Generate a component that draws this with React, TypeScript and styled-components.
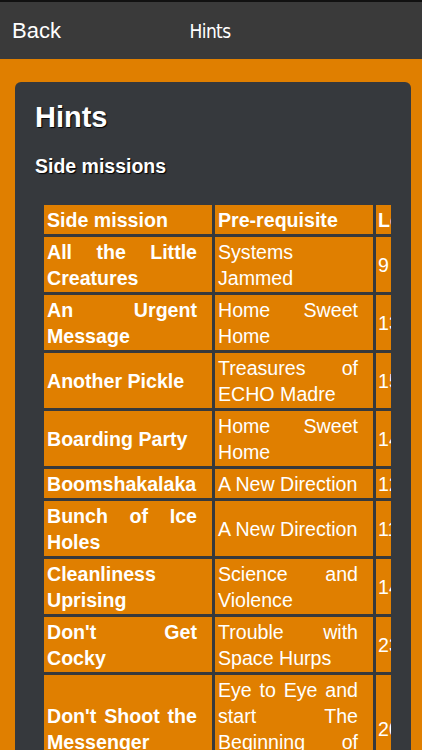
import React from 'react';
import styled, { createGlobalStyle } from 'styled-components';

const GlobalStyle = createGlobalStyle`
  html, body {
    margin: 0;
    padding: 0;
    background-color: #e07f00;
  }
  body {
    font-family: "Liberation Sans", Arial, sans-serif;
    overflow: hidden;
  }
`;

const Page = styled.div`
  width: 422px;
  height: 750px;
  overflow: hidden;
  background-color: #e07f00;
`;

const NavBar = styled.div`
  height: 57px;
  border-top: 2px solid #111;
  background-color: #3a3a3a;
  display: grid;
  grid-template-columns: 1fr auto 1fr;
  align-items: center;
  padding: 0 12px;
  color: #fff;
`;

const BackButton = styled.span`
  font-family: "Liberation Sans", Arial, sans-serif;
  font-size: 22px;
  justify-self: start;
  cursor: pointer;
`;

const NavTitle = styled.span`
  font-family: "Liberation Sans Narrow", "DejaVu Sans Condensed", "DejaVu Sans", sans-serif;
  font-stretch: condensed;
  font-size: 19px;
  letter-spacing: -0.6px;
  margin-left: -2px;
`;

const Body = styled.div`
  padding: 23px 11px 0 15px;
`;

const Card = styled.div`
  background-color: #36393d;
  border-radius: 6px;
  padding: 18px 20px 0 20px;
  height: 700px;
`;

const Title = styled.h1`
  margin: 0 0 21px 0;
  font-size: 29px;
  line-height: 34px;
  font-weight: bold;
  color: #fff;
  text-shadow: 1px 1px 1px #000;
`;

const Subtitle = styled.h2`
  margin: 0 0 24px 0;
  font-size: 19.5px;
  line-height: 23px;
  font-weight: bold;
  color: #fff;
  text-shadow: 1px 1px 1px #000;
`;

const TableScroll = styled.div`
  margin-left: 6px;
  overflow: hidden;
`;

const Table = styled.table`
  table-layout: fixed;
  border-collapse: separate;
  border-spacing: 3px;
  width: 384px;
  font-size: 19.6px;
  line-height: 26px;
  color: #fff;
`;

const Cell = styled.td<{ $bold?: boolean; $narrow?: boolean }>`
  background-color: #e07f00;
  padding: ${(p) => (p.$narrow ? '2px 3px 1px 2px' : '2px 15px 1px 3px')};
  vertical-align: middle;
  font-weight: ${(p) => (p.$bold ? 'bold' : 'normal')};
  white-space: nowrap;
  overflow: hidden;
`;

const Line = styled.div<{ $justify?: boolean }>`
  text-align: ${(p) => (p.$justify ? 'justify' : 'left')};
  text-align-last: ${(p) => (p.$justify ? 'justify' : 'left')};
  white-space: nowrap;
`;

const HeadCell = styled.th<{ $narrow?: boolean }>`
  background-color: #e07f00;
  padding: ${(p) => (p.$narrow ? '2px 3px 1px 2px' : '2px 15px 1px 3px')};
  text-align: left;
  font-weight: bold;
  white-space: nowrap;
  overflow: hidden;
`;

const missions = [
  { name: ['All the Little', 'Creatures'], req: ['Systems', 'Jammed'], level: '9' },
  { name: ['An Urgent', 'Message'], req: ['Home Sweet', 'Home'], level: '13' },
  { name: ['Another Pickle'], req: ['Treasures of', 'ECHO Madre'], level: '15' },
  { name: ['Boarding Party'], req: ['Home Sweet', 'Home'], level: '14' },
  { name: ['Boomshakalaka'], req: ['A New Direction'], level: '12' },
  { name: ['Bunch of Ice', 'Holes'], req: ['A New Direction'], level: '11' },
  { name: ['Cleanliness', 'Uprising'], req: ['Science and', 'Violence'], level: '14' },
  { name: ["Don't Get", 'Cocky'], req: ['Trouble with', 'Space Hurps'], level: '23' },
  {
    name: ["Don't Shoot the", 'Messenger'],
    req: ['Eye to Eye and', 'start The', 'Beginning of', 'the End'],
    level: '20',
  },
];

const Lines: React.FC<{ lines: string[] }> = ({ lines }) => (
  <>
    {lines.map((l, i) => (
      <Line key={i} $justify={i < lines.length - 1}>
        {l}
      </Line>
    ))}
  </>
);

const App: React.FC = () => {
  return (
    <Page>
      <GlobalStyle />
      <NavBar>
        <BackButton>Back</BackButton>
        <NavTitle>Hints</NavTitle>
        <span />
      </NavBar>
      <Body>
        <Card>
          <Title>Hints</Title>
          <Subtitle>Side missions</Subtitle>
          <TableScroll>
            <Table>
              <colgroup>
                <col style={{ width: 168 }} />
                <col style={{ width: 158 }} />
                <col style={{ width: 46 }} />
              </colgroup>
              <thead>
                <tr>
                  <HeadCell>Side mission</HeadCell>
                  <HeadCell>Pre-requisite</HeadCell>
                  <HeadCell $narrow>Level</HeadCell>
                </tr>
              </thead>
              <tbody>
                {missions.map((m) => (
                  <tr key={m.name.join(' ')}>
                    <Cell $bold>
                      <Lines lines={m.name} />
                    </Cell>
                    <Cell>
                      <Lines lines={m.req} />
                    </Cell>
                    <Cell $narrow>{m.level}</Cell>
                  </tr>
                ))}
              </tbody>
            </Table>
          </TableScroll>
        </Card>
      </Body>
    </Page>
  );
};

export default App;
